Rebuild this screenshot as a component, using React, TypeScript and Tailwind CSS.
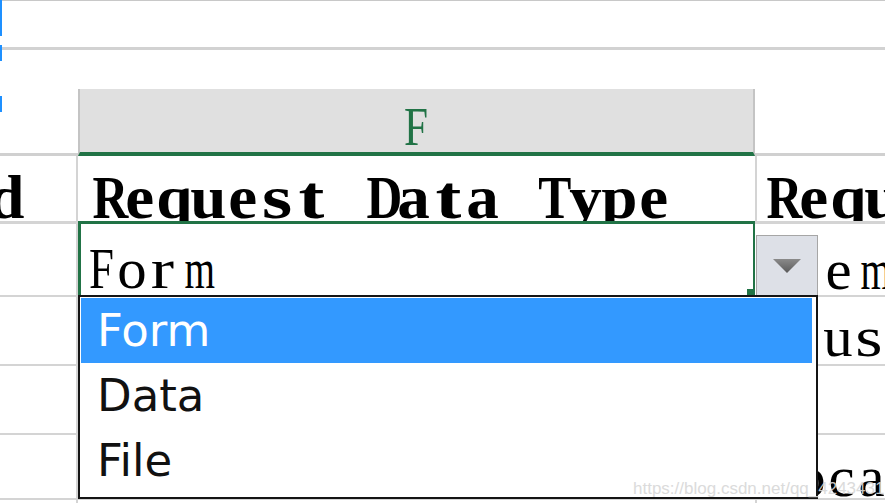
const serif = "font-['Liberation_Serif',serif]";

// bend each glyph toward the fixed pitch of the sheet's SimSun cells
const squeeze = (ch: string) => {
  if ('mwMW'.includes(ch)) return 'scale-x-[0.7]';
  if (/[A-Z]/.test(ch)) return 'scale-x-[0.8]';
  if ('tsrilfj'.includes(ch)) return 'scale-x-[1.25]';
  return 'scale-x-[1.05]';
};

const Pitch = ({ text, slot, className = '' }: { text: string; slot: string; className?: string }) => (
  <div className={`whitespace-nowrap ${serif} ${className}`}>
    {text.split('').map((ch, i) => (
      <span key={i} className={`inline-block text-center ${slot}`}>
        <span className={`inline-block ${squeeze(ch)}`}>{ch === ' ' ? '\u00a0' : ch}</span>
      </span>
    ))}
  </div>
);

const Cell = ({ className = '', children }: { className?: string; children?: React.ReactNode }) => (
  <div className={`relative overflow-hidden ${className}`}>{children}</div>
);

const head = 'text-[62px] font-bold leading-[62px] text-black';
const body = 'text-[56px] leading-[56px] text-black';

export default function App() {
  return (
    <div className="relative h-[503px] w-[885px] overflow-hidden bg-white">
      {/* window edge */}
      <div className="absolute left-0 top-0 h-[36px] w-[2px] bg-[#1e90ff]" />
      <div className="absolute left-0 top-[45px] h-[16px] w-[2px] bg-[#1e90ff]" />
      <div className="absolute left-0 top-[96px] h-[16px] w-[2px] bg-[#1e90ff]" />

      <div className="h-[1px] bg-[#c8c8c8]" />
      <div className="h-[46px]" />
      <div className="h-[3px] bg-[#d2d2d2]" />
      <div className="h-[39px]" />

      <div className="grid grid-cols-[78px_677px_130px]">
        {/* column header row */}
        <Cell className="h-[67px] border-b-[3px] border-[#d0d0d0]" />
        <Cell className="flex h-[67px] justify-center border-x-2 border-b-[4px] border-x-[#c4c4c4] border-b-[#217346] bg-[#e0e0e0] pt-[11px]">
          <Pitch text="F" slot="w-[34px]" className="text-[54px] leading-[54px] text-[#217346]" />
        </Cell>
        <Cell className="h-[67px] border-b-[3px] border-[#d0d0d0]" />

        {/* row: headers */}
        <Cell className="h-[68px] border-b-[3px] border-r-2 border-[#d4d4d4]">
          <Pitch text="Method" slot="w-[34.3px]" className={`ml-[-182px] mt-[10px] ${head}`} />
        </Cell>
        <Cell className="h-[68px] border-b-[3px] border-[#217346]">
          <Pitch text="Request Data Type" slot="w-[34.3px]" className={`ml-[10px] mt-[10px] ${head}`} />
        </Cell>
        <Cell className="h-[68px] border-b-[3px] border-l-2 border-[#d4d4d4]">
          <Pitch text="Request" slot="w-[34.3px]" className={`ml-[5px] mt-[10px] ${head}`} />
        </Cell>

        {/* row: active cell */}
        <Cell className="h-[73px] border-b-2 border-r-2 border-[#d4d4d4]" />
        <Cell className="h-[73px] border-l-[3px] border-r-2 border-[#217346]">
          <Pitch text="Form" slot="w-[30.5px]" className={`ml-[5px] mt-[17px] ${body}`} />
          <div className="absolute bottom-0 right-[-2px] h-[8px] w-[8px] bg-[#217346]" />
        </Cell>
        <Cell className="h-[73px] border-b-2 border-[#d4d4d4]">
          <Pitch text="Item" slot="w-[30.5px]" className={`ml-[7px] mt-[18px] ${body}`} />
        </Cell>

        {/* rows below */}
        <Cell className="h-[69px] border-b-2 border-r-2 border-[#d4d4d4]" />
        <Cell className="h-[69px] border-b-2 border-[#d4d4d4]" />
        <Cell className="h-[69px] border-b-2 border-l-2 border-[#d4d4d4]">
          <Pitch text="Plus" slot="w-[30.5px]" className={`ml-[5px] mt-[12px] ${body}`} />
        </Cell>

        <Cell className="h-[69px] border-b-2 border-r-2 border-[#d4d4d4]" />
        <Cell className="h-[69px] border-b-2 border-[#d4d4d4]" />
        <Cell className="h-[69px] border-b-2 border-l-2 border-[#d4d4d4]" />

        <Cell className="h-[65px] border-b-2 border-r-2 border-[#d4d4d4]" />
        <Cell className="h-[65px] border-b-2 border-[#d4d4d4]" />
        <Cell className="h-[65px] border-b-2 border-l-2 border-[#d4d4d4]">
          <Pitch text="Local" slot="w-[30.5px]" className={`ml-[8px] mt-[14px] ${body}`} />
        </Cell>

        <Cell className="h-[20px] border-r-2 border-[#d4d4d4]" />
        <Cell className="h-[20px]" />
        <Cell className="h-[20px] border-l-2 border-[#d4d4d4]" />
      </div>

      {/* dropdown button */}
      <div className="absolute left-[756px] top-[235px] flex h-[61px] w-[62px] items-center justify-center border border-[#a6a6a6] bg-[#dde0e7]">
        <svg width="30" height="16" viewBox="0 0 30 16">
          <defs>
            <linearGradient id="tri" x1="0" y1="0" x2="0" y2="1">
              <stop offset="0" stopColor="#8a8a8a" />
              <stop offset="1" stopColor="#5a5a5a" />
            </linearGradient>
          </defs>
          <path d="M1 1 L29 1 L15 15 Z" fill="url(#tri)" />
        </svg>
      </div>

      {/* dropdown list */}
      <div className="absolute left-[78px] top-[295px] h-[204px] w-[740px] border-2 border-[#141414] bg-white pb-[2px] pl-[1px] pr-[4px] pt-[1px] font-['DejaVu_Sans',sans-serif] text-[45px]">
        <div className="flex h-[65px] items-center bg-[#3399ff] pl-[16px] text-white">Form</div>
        <div className="flex h-[65px] items-center pl-[16px] text-[#111]">Data</div>
        <div className="flex h-[65px] items-center pl-[16px] text-[#111]">File</div>
      </div>

      {/* watermark */}
      <div className="absolute left-[633px] top-[476px] whitespace-nowrap font-['Liberation_Sans',sans-serif] text-[17px] text-[#d8d8d8] opacity-90">
        https://blog.csdn.net/qq_42434318
      </div>
    </div>
  );
}
